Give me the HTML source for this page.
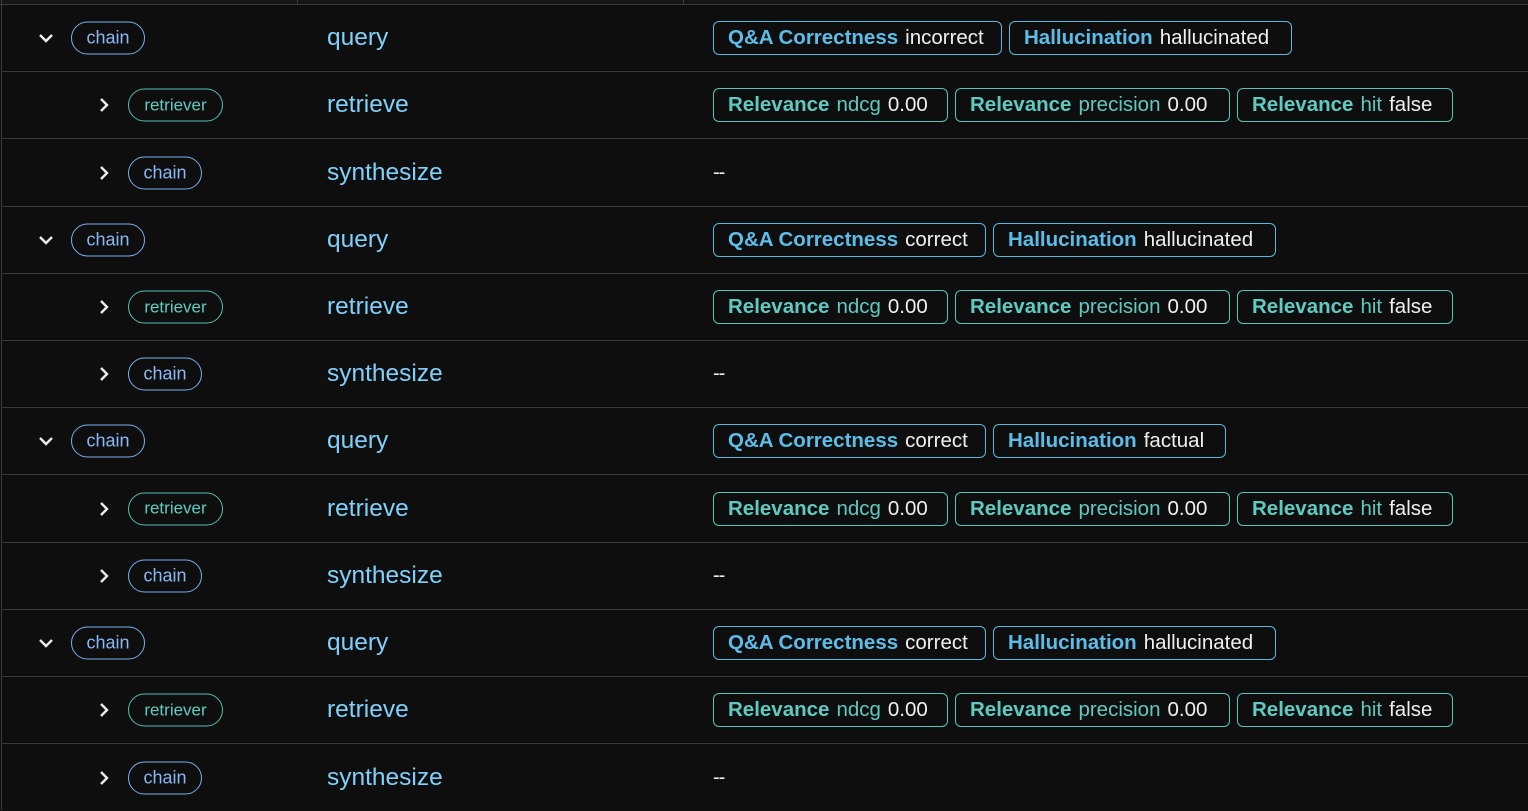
<!DOCTYPE html>
<html><head><meta charset="utf-8"><style>
body{margin:0;width:1528px;height:810px;background:#0e0e0f;overflow:hidden;font-family:"Liberation Sans",sans-serif;position:relative}
.hdr{position:absolute;left:0;top:0;width:1528px;height:4px;background:#161617;border-bottom:1px solid #3a3a3c}
.vd{position:absolute;top:0;height:4px;width:1px;background:#3a3a3c}
.lb{position:absolute;left:1px;top:0;width:1px;height:810px;background:#3a3a3c}
.row{position:absolute;left:2px;width:1526px;border-bottom:1px solid #3a3a3c;box-sizing:border-box}
.in{position:absolute;top:50%;transform:translateY(-50%);}
.pill{height:33px;border-radius:17px;border:1px solid;box-sizing:border-box;display:flex;align-items:center;justify-content:center;font-size:18px}
.chain{color:#8ab8f5;border-color:#7aaef0;width:74px}
.ret{color:#62cbbf;border-color:#55bdb1;width:95px;font-size:17px}
.name{color:#80d0fa;font-size:24.5px;left:325px}
.badges{left:711px;display:flex;gap:7px}
.b{height:34px;border:1px solid;border-radius:6px;box-sizing:border-box;display:flex;align-items:center;padding-left:14px;font-size:20.5px;color:#f0f0f0;white-space:nowrap}
.b b{margin-right:7px}
.q{border-color:#5ab8e0}.q b{color:#5cbde9}
.r{border-color:#56c4b8}.r b{color:#5fcac0}.r i{font-style:normal;color:#5fcac0;margin-right:7px}
.dash{left:711px;color:#eee;font-size:20px;letter-spacing:-1px}
.dn{left:36px;height:10px;line-height:0}
.rt{left:97px;height:16px;line-height:0}
</style></head><body>
<div class="hdr"></div><div class="vd" style="left:297px"></div><div class="vd" style="left:683px"></div>
<div class="lb"></div>

<div class="row" style="top:5px;height:67px">
<div class="in dn"><svg width="16" height="10" viewBox="0 0 16 10"><path d="M2 2l6 6 6-6" stroke="#eee" stroke-width="2.4" fill="none"/></svg></div>
<div class="in pill chain" style="left:69px">chain</div><div class="in name">query</div>
<div class="in badges"><div class="b q" style="width:289px"><b>Q&amp;A Correctness</b>incorrect</div><div class="b q" style="width:283px"><b>Hallucination</b>hallucinated</div></div></div>
<div class="row" style="top:72px;height:67px">
<div class="in rt"><svg width="10" height="16" viewBox="0 0 10 16"><path d="M2 2l6 6-6 6" stroke="#eee" stroke-width="2.4" fill="none"/></svg></div>
<div class="in pill ret" style="left:126px">retriever</div><div class="in name">retrieve</div>
<div class="in badges"><div class="b r" style="width:235px"><b>Relevance</b><i>ndcg</i>0.00</div><div class="b r" style="width:275px"><b>Relevance</b><i>precision</i>0.00</div><div class="b r" style="width:216px"><b>Relevance</b><i>hit</i>false</div></div></div>
<div class="row" style="top:139px;height:68px">
<div class="in rt"><svg width="10" height="16" viewBox="0 0 10 16"><path d="M2 2l6 6-6 6" stroke="#eee" stroke-width="2.4" fill="none"/></svg></div>
<div class="in pill chain" style="left:126px">chain</div><div class="in name">synthesize</div><div class="in dash">--</div></div>

<div class="row" style="top:207px;height:67px">
<div class="in dn"><svg width="16" height="10" viewBox="0 0 16 10"><path d="M2 2l6 6 6-6" stroke="#eee" stroke-width="2.4" fill="none"/></svg></div>
<div class="in pill chain" style="left:69px">chain</div><div class="in name">query</div>
<div class="in badges"><div class="b q" style="width:273px"><b>Q&amp;A Correctness</b>correct</div><div class="b q" style="width:283px"><b>Hallucination</b>hallucinated</div></div></div>
<div class="row" style="top:274px;height:67px">
<div class="in rt"><svg width="10" height="16" viewBox="0 0 10 16"><path d="M2 2l6 6-6 6" stroke="#eee" stroke-width="2.4" fill="none"/></svg></div>
<div class="in pill ret" style="left:126px">retriever</div><div class="in name">retrieve</div>
<div class="in badges"><div class="b r" style="width:235px"><b>Relevance</b><i>ndcg</i>0.00</div><div class="b r" style="width:275px"><b>Relevance</b><i>precision</i>0.00</div><div class="b r" style="width:216px"><b>Relevance</b><i>hit</i>false</div></div></div>
<div class="row" style="top:341px;height:67px">
<div class="in rt"><svg width="10" height="16" viewBox="0 0 10 16"><path d="M2 2l6 6-6 6" stroke="#eee" stroke-width="2.4" fill="none"/></svg></div>
<div class="in pill chain" style="left:126px">chain</div><div class="in name">synthesize</div><div class="in dash">--</div></div>

<div class="row" style="top:408px;height:67px">
<div class="in dn"><svg width="16" height="10" viewBox="0 0 16 10"><path d="M2 2l6 6 6-6" stroke="#eee" stroke-width="2.4" fill="none"/></svg></div>
<div class="in pill chain" style="left:69px">chain</div><div class="in name">query</div>
<div class="in badges"><div class="b q" style="width:273px"><b>Q&amp;A Correctness</b>correct</div><div class="b q" style="width:233px"><b>Hallucination</b>factual</div></div></div>
<div class="row" style="top:475px;height:68px">
<div class="in rt"><svg width="10" height="16" viewBox="0 0 10 16"><path d="M2 2l6 6-6 6" stroke="#eee" stroke-width="2.4" fill="none"/></svg></div>
<div class="in pill ret" style="left:126px">retriever</div><div class="in name">retrieve</div>
<div class="in badges"><div class="b r" style="width:235px"><b>Relevance</b><i>ndcg</i>0.00</div><div class="b r" style="width:275px"><b>Relevance</b><i>precision</i>0.00</div><div class="b r" style="width:216px"><b>Relevance</b><i>hit</i>false</div></div></div>
<div class="row" style="top:543px;height:67px">
<div class="in rt"><svg width="10" height="16" viewBox="0 0 10 16"><path d="M2 2l6 6-6 6" stroke="#eee" stroke-width="2.4" fill="none"/></svg></div>
<div class="in pill chain" style="left:126px">chain</div><div class="in name">synthesize</div><div class="in dash">--</div></div>

<div class="row" style="top:610px;height:67px">
<div class="in dn"><svg width="16" height="10" viewBox="0 0 16 10"><path d="M2 2l6 6 6-6" stroke="#eee" stroke-width="2.4" fill="none"/></svg></div>
<div class="in pill chain" style="left:69px">chain</div><div class="in name">query</div>
<div class="in badges"><div class="b q" style="width:273px"><b>Q&amp;A Correctness</b>correct</div><div class="b q" style="width:283px"><b>Hallucination</b>hallucinated</div></div></div>
<div class="row" style="top:677px;height:67px">
<div class="in rt"><svg width="10" height="16" viewBox="0 0 10 16"><path d="M2 2l6 6-6 6" stroke="#eee" stroke-width="2.4" fill="none"/></svg></div>
<div class="in pill ret" style="left:126px">retriever</div><div class="in name">retrieve</div>
<div class="in badges"><div class="b r" style="width:235px"><b>Relevance</b><i>ndcg</i>0.00</div><div class="b r" style="width:275px"><b>Relevance</b><i>precision</i>0.00</div><div class="b r" style="width:216px"><b>Relevance</b><i>hit</i>false</div></div></div>
<div class="row" style="top:744px;height:67px;border-bottom:none">
<div class="in rt"><svg width="10" height="16" viewBox="0 0 10 16"><path d="M2 2l6 6-6 6" stroke="#eee" stroke-width="2.4" fill="none"/></svg></div>
<div class="in pill chain" style="left:126px">chain</div><div class="in name">synthesize</div><div class="in dash">--</div></div>
</body></html>
